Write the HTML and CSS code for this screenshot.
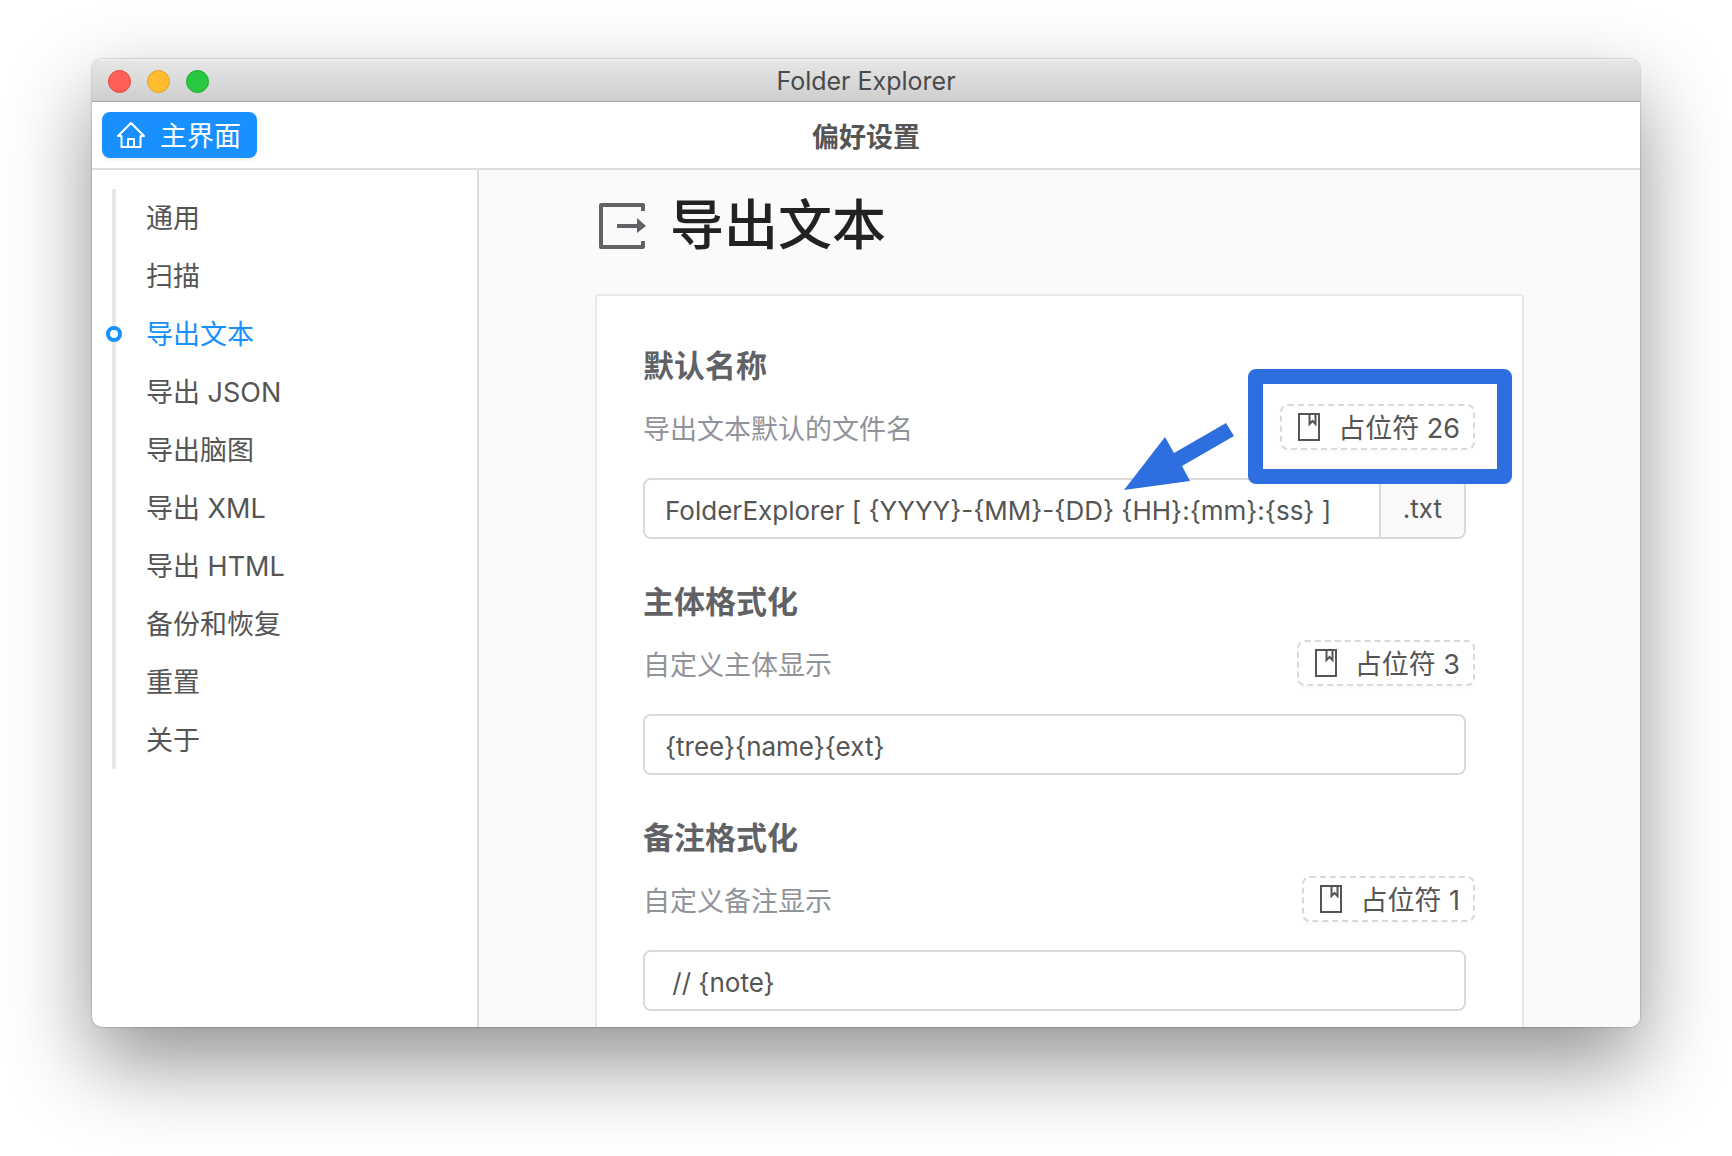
FILE: index.html
```html
<!DOCTYPE html>
<html lang="zh-CN">
<head>
<meta charset="utf-8">
<title>Folder Explorer</title>
<link rel="stylesheet" href="styles.css">
</head>
<body>
<svg class="sprite" aria-hidden="true">
  <symbol id="icon-book" viewBox="0 0 22 28">
    <path d="M1 1H21V27H1ZM11.500 1V11L14.500 8L17.500 11V1" fill="none" stroke="currentColor" stroke-width="2"/>
  </symbol>
</svg>
<div class="window">
  <div class="titlebar">
    <div class="lights">
      <span class="light light-close"></span>
      <span class="light light-min"></span>
      <span class="light light-max"></span>
    </div>
    <span class="titlebar-text">Folder Explorer</span>
  </div>
  <header class="toolbar">
    <button class="home" type="button">
      <svg class="home-icon" viewBox="0 0 28 28" aria-hidden="true">
        <path d="M1 15L14 2L27 15H23.500V26H4.500V15ZM11 26V18H17V26" fill="none" stroke="currentColor" stroke-width="2" stroke-linejoin="round"/>
      </svg>
      <span class="button-text">主界面</span>
    </button>
    <h1 class="toolbar-title">偏好设置</h1>
  </header>
  <div class="body">
    <nav class="sidebar">
      <ul class="menu">
        <li><a class="menu-link" href="#general">通用</a></li>
        <li><a class="menu-link" href="#scan">扫描</a></li>
        <li><a class="menu-link is-active" href="#text">导出文本</a></li>
        <li><a class="menu-link" href="#json">导出 JSON</a></li>
        <li><a class="menu-link" href="#mind">导出脑图</a></li>
        <li><a class="menu-link" href="#xml">导出 XML</a></li>
        <li><a class="menu-link" href="#html">导出 HTML</a></li>
        <li><a class="menu-link" href="#backup">备份和恢复</a></li>
        <li><a class="menu-link" href="#reset">重置</a></li>
        <li><a class="menu-link" href="#about">关于</a></li>
      </ul>
    </nav>
    <main class="content">
      <h2 class="page-title">
        <svg class="page-icon" viewBox="0 0 48 48" aria-hidden="true">
          <path d="M45 9V3H3V45H45V39" fill="none" stroke="currentColor" stroke-width="4" stroke-linejoin="round"/>
          <path d="M19 22H39V16L48 24L39 31V26H19Z" fill="currentColor"/>
        </svg>
        <span>导出文本</span>
      </h2>
      <form class="card">
        <section class="field">
          <label class="label" for="name">默认名称</label>
          <div class="row">
            <p class="desc">导出文本默认的文件名</p>
            <div class="marked">
              <button class="tag" type="button"><svg class="tag-icon" aria-hidden="true"><use href="#icon-book"/></svg><span class="button-text">占位符 26</span></button>
              <svg class="arrow" viewBox="0 0 110 70" aria-hidden="true">
                <path d="M0 70L41 17L50 33L102 3L110 16L58 46L66 61Z" fill="#2e6fe0"/>
              </svg>
            </div>
          </div>
          <div class="group">
            <input class="input" id="name" type="text" value="FolderExplorer [ {YYYY}-{MM}-{DD} {HH}:{mm}:{ss} ]">
            <span class="suffix">.txt</span>
          </div>
        </section>
        <section class="field">
          <label class="label" for="format">主体格式化</label>
          <div class="row">
            <p class="desc">自定义主体显示</p>
            <button class="tag" type="button"><svg class="tag-icon" aria-hidden="true"><use href="#icon-book"/></svg><span class="button-text">占位符 3</span></button>
          </div>
          <div class="group">
            <input class="input" id="format" type="text" value="{tree}{name}{ext}">
          </div>
        </section>
        <section class="field">
          <label class="label" for="note">备注格式化</label>
          <div class="row">
            <p class="desc">自定义备注显示</p>
            <button class="tag" type="button"><svg class="tag-icon" aria-hidden="true"><use href="#icon-book"/></svg><span class="button-text">占位符 1</span></button>
          </div>
          <div class="group">
            <input class="input" id="note" type="text" value=" // {note}">
          </div>
        </section>
      </form>
    </main>
  </div>
</div>
</body>
</html>
```
FILE: styles.css
```css
*, *::before { box-sizing: border-box; }

body {
  display: flex;
  height: 100vh;
  margin: 0;
  padding: 59px 92px 129px;
  background: #fff;
  color: #555;
  font-family: Inter, "Noto Sans CJK SC", sans-serif;
  font-size: 27px;
  overflow: hidden;
}

h1, h2, p, ul { margin: 0; padding: 0; }
button, input { font: inherit; color: inherit; }

.sprite { position: absolute; width: 0; height: 0; }

.window {
  display: flex;
  flex: 1;
  flex-direction: column;
  min-width: 0;
  border-radius: 10px;
  background: #fff;
  box-shadow: 0 0 2px rgba(0, 0, 0, .4), 0 36px 84px rgba(0, 0, 0, .43);
  overflow: hidden;
}

.titlebar {
  display: grid;
  grid-template-columns: 1fr auto 1fr;
  flex: none;
  align-items: center;
  height: 43px;
  padding: 0 16px;
  border-top: 2px solid #ececec;
  border-bottom: 1px solid #a8a8a8;
  background: linear-gradient(#e6e6e6, #cecece);
  color: #4a4a4a;
  font-size: 25px;
}

.lights { display: flex; gap: 16px; }

.light {
  width: 23px;
  height: 23px;
  border: 1px solid;
  border-radius: 50%;
}

.light-close { background: #ff5f57; border-color: #e2463f; }
.light-min { background: #ffbd2e; border-color: #e0a028; }
.light-max { background: #28c940; border-color: #1dad2b; }

.toolbar {
  display: grid;
  grid-template-columns: 1fr auto 1fr;
  flex: none;
  align-items: center;
  height: 68px;
  padding: 0 10px;
  border-bottom: 2px solid #dcdcdc;
}

.home {
  display: flex;
  align-items: center;
  justify-self: start;
  gap: 15px;
  height: 46px;
  padding: 0 16px 0 15px;
  border: 0;
  border-radius: 8px;
  background: #1890ff;
  box-shadow: 0 3px 2px rgba(0, 0, 0, .05);
  color: #fff;
}

.home-icon { width: 28px; height: 28px; }

.button-text { padding-bottom: 2px; }

.toolbar-title { font-size: 27px; font-weight: 600; }

.body { display: flex; flex: 1; min-height: 0; }

.sidebar {
  flex: none;
  width: 387px;
  padding: 19px 20px;
  border-right: 2px solid #dcdcdc;
}

.menu {
  border-left: 4px solid #e8e8e8;
  list-style: none;
}

.menu-link {
  display: block;
  position: relative;
  padding: 2px 0 0 30px;
  color: inherit;
  line-height: 56px;
  text-decoration: none;
}

.menu-link.is-active { color: #1890ff; }

.menu-link.is-active::before {
  content: "";
  position: absolute;
  top: 21px;
  left: -10px;
  width: 16px;
  height: 16px;
  border: 4px solid #1890ff;
  border-radius: 50%;
  background: #fff;
}

.content {
  flex: 1;
  min-width: 0;
  padding: 16px 116px 0;
  background: #fafafa;
  overflow: hidden;
}

.page-title {
  display: flex;
  align-items: center;
  gap: 24px;
  padding-left: 3px;
  color: #222;
  font-size: 54px;
  font-weight: 500;
  line-height: 80px;
}

.page-icon { width: 48px; height: 48px; color: #606266; }

.card {
  display: flex;
  flex-direction: column;
  gap: 42px;
  margin-top: 28px;
  padding: 49px 56px 49px 46px;
  border: 2px solid #e8e8e8;
  border-radius: 4px;
  background: #fff;
}

.label {
  display: block;
  color: #606266;
  font-size: 31px;
  font-weight: 600;
  line-height: 42px;
}

.row {
  display: flex;
  align-items: flex-end;
  justify-content: space-between;
  margin: 17px -9px 28px 0;
}

.desc { color: #909399; line-height: 40px; }

.tag {
  display: flex;
  align-items: center;
  gap: 18px;
  height: 46px;
  padding: 0 13px 0 16px;
  border: 2px dashed #d9d9d9;
  border-radius: 8px;
  background: #fff;
  box-shadow: 0 3px 2px rgba(0, 0, 0, .02);
}

.tag-icon { width: 22px; height: 28px; }

.marked { position: relative; }

/* highlight frame and pointer laid over the form */
.marked::before {
  content: "";
  position: absolute;
  inset: -35px -37px -34px -32px;
  border: 15px solid #2e6fe0;
  border-radius: 8px;
  pointer-events: none;
}

.arrow {
  position: absolute;
  top: 16px;
  right: 241px;
  width: 110px;
  height: 70px;
}

.group {
  display: flex;
  height: 61px;
  border: 2px solid #d9d9d9;
  border-radius: 8px;
  overflow: hidden;
}

.input {
  flex: 1;
  min-width: 0;
  padding: 3px 20px 0;
  border: 0;
  outline: 0;
  background: #fff;
  font-size: 26px;
}

.suffix {
  padding: 0 22px;
  border-left: 2px solid #d9d9d9;
  background: #fafafa;
  font-size: 26px;
  line-height: 58px;
}
```
